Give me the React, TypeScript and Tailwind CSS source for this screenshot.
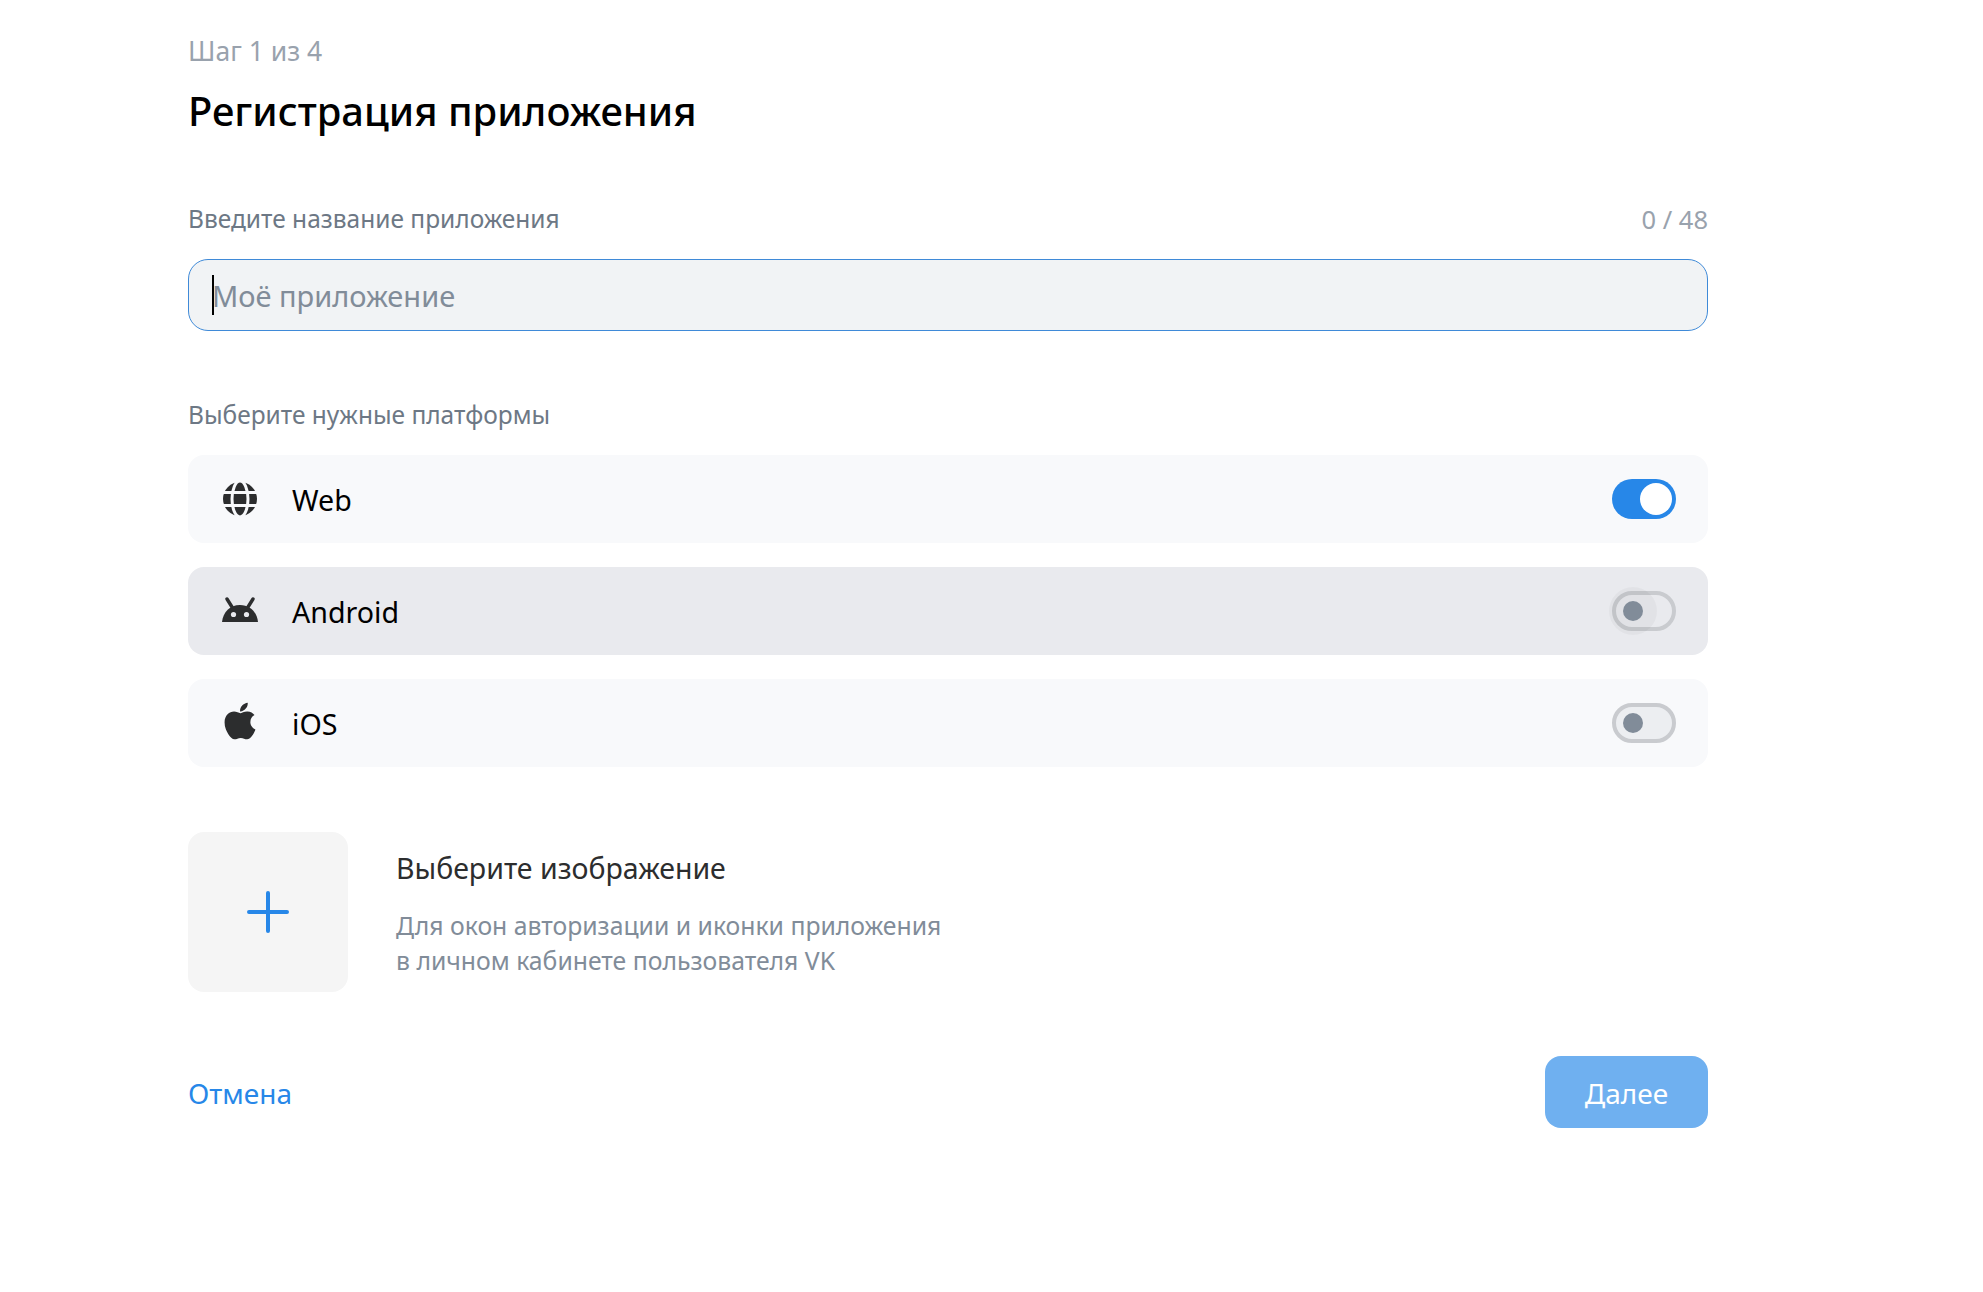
import { FaApple } from "react-icons/fa";

const font = "font-['Noto_Sans','Open_Sans',sans-serif]";

function GlobeIcon() {
  return (
    <svg width="34" height="34" viewBox="0 0 34 34">
      <mask id="globe-cuts">
        <circle cx="17" cy="17" r="17" fill="white" />
        <g fill="none" stroke="black" strokeWidth="3">
          <path d="M0 10.5h34M0 23.5h34" />
          <ellipse cx="17" cy="17" rx="8" ry="18" />
        </g>
      </mask>
      <rect width="34" height="34" fill="currentColor" mask="url(#globe-cuts)" />
    </svg>
  );
}

function AndroidIcon() {
  return (
    <svg width="36" height="25" viewBox="0 0 36 25" className="mb-1">
      <path d="M0 25C1 15 8 8 18 8s17 7 18 17Z" fill="currentColor" />
      <path d="M10 10 5 2M26 10l5-8" stroke="currentColor" strokeWidth="3.4" strokeLinecap="round" />
      <circle cx="11.5" cy="17.5" r="2.6" fill="#e9eaee" />
      <circle cx="24.5" cy="17.5" r="2.6" fill="#e9eaee" />
    </svg>
  );
}

function Toggle({ on, hover }: { on?: boolean; hover?: boolean }) {
  if (on) {
    return (
      <div className="flex h-10 w-16 items-center justify-end rounded-full bg-[#2787e8] pr-1">
        <div className="h-8 w-8 rounded-full bg-white" />
      </div>
    );
  }
  return (
    <div className={`relative flex h-10 w-16 items-center rounded-full border-4 border-[#c9cbcf] pl-[7px] ${hover ? "" : "bg-[#eceef1]"}`}>
      {hover && <div className="absolute left-[-7px] top-[-8px] h-12 w-12 rounded-full bg-black/[0.03]" />}
      <div className="relative h-5 w-5 rounded-full bg-[#818c99]" />
    </div>
  );
}

function PlatformRow({ icon, name, on, hover }: { icon: React.ReactNode; name: string; on?: boolean; hover?: boolean }) {
  return (
    <div className={`flex h-[88px] items-center rounded-2xl pl-[34px] pr-8 ${hover ? "bg-[#e9eaee]" : "bg-[#f8f9fb]"}`}>
      <div className="flex w-9 justify-center text-[#2c2d2e]">{icon}</div>
      <span className="ml-[34px] pt-0.5 text-[28.6px] leading-9 text-black">{name}</span>
      <div className="ml-auto">
        <Toggle on={on} hover={hover} />
      </div>
    </div>
  );
}

export default function App() {
  return (
    <div className={`min-h-[1292px] bg-white ${font}`}>
      <div className="ml-[188px] w-[1520px] pt-[33px]">
        <div className="text-[26.5px] leading-9 text-[#99a2ad]">Шаг 1 из 4</div>
        <h1 className="mt-4 text-[39.9px] font-medium leading-[52px] text-black">Регистрация приложения</h1>

        <div className="mt-[66px] flex items-center justify-between text-[24.5px] leading-8">
          <span className="text-[#6d7885]">Введите название приложения</span>
          <span className="text-[25.5px] text-[#99a2ad]">0 / 48</span>
        </div>
        <div className="relative mt-6">
          <input
            readOnly
            placeholder="Моё приложение"
            className="h-[72px] w-full rounded-[20px] border border-[#3f8ad8] bg-[#f1f3f5] pl-[23px] pt-px text-[29px] outline-none placeholder:text-[#818c99]"
          />
          <div className="absolute left-6 top-4 h-10 w-0.5 bg-black" />
        </div>

        <div className="mt-[68px] text-[24.5px] leading-8 text-[#6d7885]">Выберите нужные платформы</div>
        <div className="mt-6 flex flex-col gap-6">
          <PlatformRow icon={<GlobeIcon />} name="Web" on />
          <PlatformRow icon={<AndroidIcon />} name="Android" hover />
          <PlatformRow icon={<FaApple size={42} className="mb-1" />} name="iOS" />
        </div>

        <div className="mt-[65px] flex items-start gap-12">
          <div className="flex h-40 w-40 items-center justify-center rounded-2xl bg-[#f5f5f5]">
            <svg width="42" height="42" viewBox="0 0 42 42" fill="none" stroke="#2787e8" strokeWidth="4" strokeLinecap="round">
              <path d="M21 2v38M2 21h38" />
            </svg>
          </div>
          <div className="pt-[18px]">
            <div className="text-[28.5px] leading-9 text-[#2c2d2e]">Выберите изображение</div>
            <div className="mt-[22px] text-[24.75px] leading-[35px] text-[#818c99]">
              Для окон авторизации и иконки приложения
              <br />в личном кабинете пользователя VK
            </div>
          </div>
        </div>

        <div className="mt-16 flex items-center justify-between">
          <span className="pt-0.5 text-[28px] leading-9 text-[#2787e8]">Отмена</span>
          <button className="h-[72px] w-[163px] rounded-2xl bg-[#6fb0f0] pt-0.5 text-[28px] text-white">Далее</button>
        </div>
      </div>
    </div>
  );
}
